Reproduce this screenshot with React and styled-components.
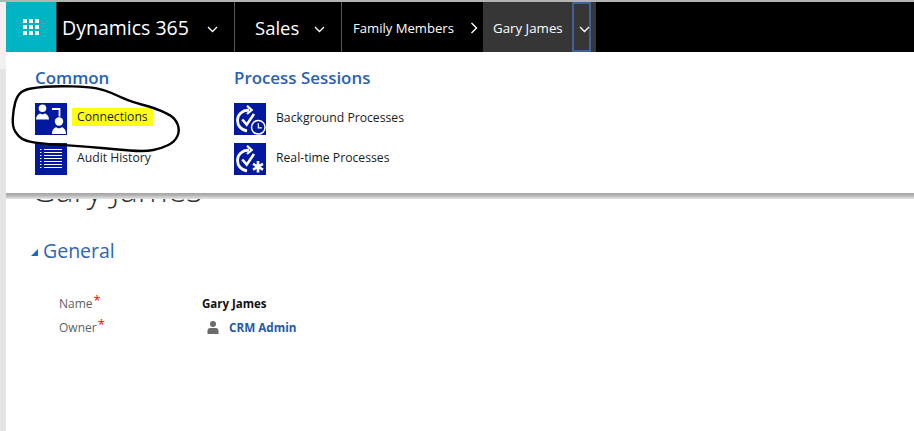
import React from "react";
import styled, { createGlobalStyle } from "styled-components";

const Global = createGlobalStyle`
  html, body { margin: 0; padding: 0; background: #fff; }
  body { font-family: "Open Sans", "Noto Sans", "Liberation Sans", sans-serif; overflow: hidden; }
`;
const Page = styled.div`
  width: 914px; height: 431px; display: flex; overflow: hidden; background: #fff;
`;
const Gutter = styled.div`
  width: 6px; flex: none; display: flex; flex-direction: column;
  background: #e5e5e5;
`;
const GutterTop = styled.div`
  height: 69px; background: #f1f1f1; border-top: 2px solid #b4b4b4; box-sizing: border-box;
`;
const Main = styled.div`
  position: relative; flex: 1; min-width: 0; display: flex; flex-direction: column;
`;
const TopEdge = styled.div` height: 2px; flex: none; background: #b4b4b4; `;
const Nav = styled.nav`
  height: 50px; flex: none; display: flex; align-items: stretch; background: #000; color: #fff;
`;
const Waffle = styled.div`
  width: 50px; flex: none; background: #00b5c3; display: grid; place-items: center;
  border-right: 1px solid #3c3c3c; box-sizing: content-box;
`;
const WaffleGrid = styled.div`
  display: grid; grid-template-columns: repeat(3, 4px); grid-auto-rows: 4px; gap: 2px;
`;
const Dot = styled.i` display: block; background: #fff; `;
const NavItem = styled.div`
  display: flex; align-items: center; width: ${p => p.$w}px; flex: none; box-sizing: border-box;
  padding-left: ${p => p.$pad}px; border-right: 1px solid #555;
  font-family: "Open Sans", sans-serif; font-size: ${p => p.$size}px; white-space: nowrap;
`;
const Chevron = styled.svg`
  width: 11px; height: 7px; flex: none; fill: none; stroke: #fff; stroke-width: 1.3;
  margin-left: ${p => p.$ml || 0}px; margin-top: 4px;
`;
const Crumb = styled.div`
  display: flex; align-items: center; flex: none; font-size: 13.1px; font-weight: 400;
  padding: 1px 0 0 11px; white-space: nowrap; width: 141px; box-sizing: border-box;
`;
const CrumbArrow = styled.svg`
  width: 8px; height: 12px; margin-left: 16px; fill: none; stroke: #fff; stroke-width: 1.4;
`;
const Current = styled.div`
  width: 113px; flex: none; background: #363636; display: flex; align-items: stretch;
  box-sizing: border-box; padding-left: 10px; font-size: 13.3px;
`;
const CurrentName = styled.span` width: 79px; flex: none; align-self: center; white-space: nowrap; padding-top: 1px; `;
const CurrentToggle = styled.div`
  width: 19px; flex: none; display: flex; align-items: center; justify-content: center;
  box-sizing: border-box; border: 2px solid #3d6199; padding-left: 5px;
`;
const Content = styled.div`
  flex: 1; padding: 117px 0 0 27px; background: #fff;
`;
const Title = styled.h1`
  margin: 0 0 0 -2px; font-weight: 300; font-size: 34px; line-height: 40px; color: #333;
  font-family: "Open Sans", sans-serif;
`;
const SectionHead = styled.h2`
  margin: 28px 0 0 -2px; display: flex; align-items: center; gap: 5px; font-weight: 400;
  font-size: 19.5px; line-height: 28px; color: #2f66b5; font-family: "Open Sans", sans-serif;
`;
const Caret = styled.svg` width: 7px; height: 7px; fill: #0f6fc6; flex: none; margin-top: 2px;`;
const Fields = styled.div`
  margin: 26px 0 0 26px; display: grid; grid-template-columns: 143px 1fr; grid-auto-rows: 24px;
  align-items: center; font-size: 12px;
`;
const Label = styled.div` color: #5f5f5f; display: flex; gap: 1px; `;
const Star = styled.span` color: #f00000; font-size: 13px; line-height: 10px; `;
const Value = styled.div`
  font-weight: 700; font-size: ${p => p.$link ? 11.7 : 11.5}px; color: ${p => p.$link ? "#1f5ba8" : "#111"};
  display: flex; align-items: center; gap: 10px; padding-left: ${p => p.$link ? 5 : 0}px;
`;
const PersonIcon = styled.svg` width: 12px; height: 13px; fill: #6b6b6b; flex: none;`;
const Panel = styled.div`
  position: absolute; left: 0; right: 0; top: 52px; height: 141px; background: #fff;
  display: flex; padding: 15px 0 0 29px; box-sizing: border-box;
  &::after {
    content: ""; position: absolute; left: 0; right: 0; top: 100%; height: 6px;
    background: linear-gradient(#a4a4a4, #b4b4b4 40%, #e6e6e6);
  }
`;
const Column = styled.div` width: ${p => p.$w}px; flex: none; display: flex; flex-direction: column; `;
const ColTitle = styled.h3`
  margin: 0 0 14px; font-size: 16.9px; line-height: 22px; font-weight: 600; color: #2b62b3;
  font-family: "Open Sans", sans-serif;
`;
const Entry = styled.div`
  display: flex; align-items: center; height: 32px; margin-bottom: 8px; gap: 10px;
  font-size: 12.2px; color: #1c1c1c;
`;
const EntryIcon = styled.svg` width: 32px; height: 32px; flex: none; background: #0019a0; `;
const EntryText = styled.span` margin-bottom: 4px; `;
const Highlight = styled.span`
  background: #ffff14; margin: 0 0 4px -5px; padding: 1px 5px; line-height: 16px; height: 16px;
`;
const Scribble = styled.svg`
  position: absolute; left: 0; top: 78px; width: 190px; height: 80px; fill: none; stroke: #000;
  stroke-width: 2.4; stroke-linecap: round; stroke-linejoin: round; pointer-events: none;
`;

const loop = [
  [17.3, 12], [30, 9.5], [49, 8], [82.3, 8.7], [99, 12], [112, 18], [125.7, 23.7], [149, 30.3], [160, 35], [169, 40.3],
  [174, 52], [169, 63.7], [155.7, 70.3], [139, 73.7], [109, 71.3], [82.3, 68.7], [55.7, 67], [32.3, 65.3], [20, 63], [12.3, 58.7],
  [6.3, 48.7], [7.3, 32], [10.7, 18.7],
];
const loopPath = (() => {
  const mid = (a, b) => [(a[0] + b[0]) / 2, (a[1] + b[1]) / 2];
  const n = loop.length;
  const start = mid(loop[n - 1], loop[0]);
  let d = `M${start[0]} ${start[1]}`;
  loop.forEach((pt, i) => {
    const m = mid(pt, loop[(i + 1) % n]);
    d += `Q${pt[0]} ${pt[1]} ${m[0]} ${m[1]}`;
  });
  return d + "Z";
})();

const Down = ({ ml }) => (
  <Chevron $ml={ml} viewBox="0 0 11 7"><path d="M1 1l4.500 4.500L10 1" /></Chevron>
);

const ProcessMark = () => (
  <>
    <path d="M15 7C8 7.500 3.500 11.500 3.500 17.500c0 5 3.500 9.500 9.500 10.500" fill="none" stroke="#fff" strokeWidth="2.800" />
    <path d="M13 2.700L17.700 7 13 11" fill="none" stroke="#fff" strokeWidth="2.200" />
    <path d="M8.300 16.500l4.400 5.200L20 11" fill="none" stroke="#fff" strokeWidth="2.600" />
  </>
);

export default function App() {
  return (
    <Page>
      <Global />
      <Gutter><GutterTop /></Gutter>
      <Main>
        <TopEdge />
        <Nav>
          <Waffle>
            <WaffleGrid>{Array.from({ length: 9 }, (_, i) => <Dot key={i} />)}</WaffleGrid>
          </Waffle>
          <NavItem $w={178} $pad={5} $size={19.5}>Dynamics 365<Down ml={18} /></NavItem>
          <NavItem $w={107} $pad={20} $size={18.5}>Sales<Down ml={15} /></NavItem>
          <Crumb>Family Members<CrumbArrow viewBox="0 0 8 12"><path d="M1.500 1l5 5-5 5" /></CrumbArrow></Crumb>
          <Current>
            <CurrentName>Gary James</CurrentName>
            <CurrentToggle><Down /></CurrentToggle>
          </Current>
        </Nav>
        <Content>
          <Title>Gary James</Title>
          <SectionHead><Caret viewBox="0 0 7 7"><path d="M7 0v7H0z" /></Caret>General</SectionHead>
          <Fields>
            <Label>Name<Star>*</Star></Label>
            <Value>Gary James</Value>
            <Label>Owner<Star>*</Star></Label>
            <Value $link>
              <PersonIcon viewBox="0 0 12 13"><circle cx="6" cy="3" r="3" /><path d="M.5 13V9.500C.5 7.800 2 7 3.500 7h5c1.500 0 3 .8 3 2.500V13z" /></PersonIcon>
              CRM Admin
            </Value>
          </Fields>
        </Content>
        <Panel>
          <Column $w={199}>
            <ColTitle>Common</ColTitle>
            <Entry>
              <EntryIcon viewBox="0 0 32 32">
                <g fill="#fff">
                  <circle cx="7.500" cy="5.300" r="3.800" />
                  <path d="M1 16.500c0-3.500 2-5.500 4-6L7.500 11.500l2.500-1c2 .5 4 2.500 4 6z" />
                  <circle cx="24" cy="18.500" r="4.200" />
                  <path d="M17 31c0-4 2-6 4-6.700l3 1.200 3-1.200c2 .7 4 2.700 4 6.700z" />
                </g>
                <path d="M17 6h7.500v7.500" fill="none" stroke="#fff" strokeWidth="1.800" />
              </EntryIcon>
              <Highlight>Connections</Highlight>
            </Entry>
            <Entry>
              <EntryIcon viewBox="0 0 32 32">
                <g stroke="#fff" strokeWidth="1">
                  <path d="M5 6.500h1.500M5 9.500h1.500M5 12.500h1.500M5 15.500h1.500M5 18.500h1.500M5 21.500h1.500M5 24.500h1.500" />
                  <path d="M9 6.500h18M9 9.500h18M9 12.500h18M9 15.500h18M9 18.500h18M9 21.500h18M9 24.500h18" />
                </g>
              </EntryIcon>
              <EntryText>Audit History</EntryText>
            </Entry>
          </Column>
          <Column $w={260}>
            <ColTitle>Process Sessions</ColTitle>
            <Entry>
              <EntryIcon viewBox="0 0 32 32">
                <ProcessMark />
                <circle cx="24.300" cy="24.300" r="6.800" fill="#0019a0" stroke="#fff" strokeWidth="1.500" />
                <path d="M24.300 20.300v4.500h3.500" fill="none" stroke="#fff" strokeWidth="1.200" />
              </EntryIcon>
              <EntryText>Background Processes</EntryText>
            </Entry>
            <Entry>
              <EntryIcon viewBox="0 0 32 32">
                <ProcessMark />
                <path d="M24 18v11.500M19 20.900l10 5.700M29 20.900l-10 5.700" stroke="#fff" strokeWidth="2.600" fill="none" />
              </EntryIcon>
              <EntryText>Real-time Processes</EntryText>
            </Entry>
          </Column>
        </Panel>
        <Scribble viewBox="0 0 190 80"><path d={loopPath} /></Scribble>
      </Main>
    </Page>
  );
}
